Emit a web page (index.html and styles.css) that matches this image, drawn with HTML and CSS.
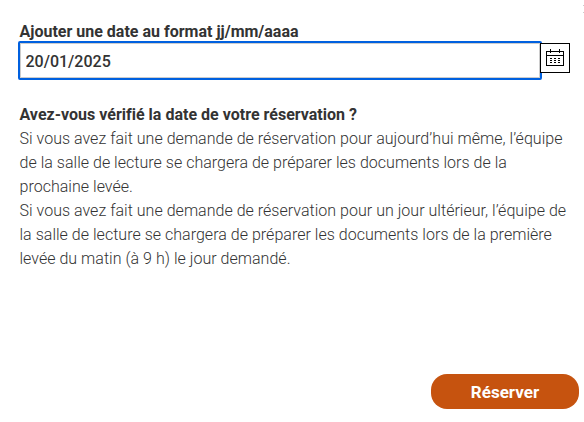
FILE: index.html
```
<!DOCTYPE html>
<html lang="fr">
<head>
<meta charset="utf-8">
<title>Réservation</title>
<link rel="stylesheet" href="styles.css">
</head>
<body>
<form class="dialog">
<span class="edge" aria-hidden="true"></span>
<label class="label" for="date">Ajouter une date au format jj/mm/aaaa</label>
<div class="field">
<input class="input" id="date" type="text" value="20/01/2025">
<button class="picker" type="button" aria-label="Calendrier">
<svg width="18" height="18" viewBox="0 0 18 18" shape-rendering="crispEdges"><path d="M.5 2.500h17v14H.5zM.5 6.500h17M4.500 0v4M13.500 0v4" fill="none" stroke="#000"/><path d="M4 9h2v1H4zM8 9h2v1H8zM12 9h2v1h-2zM4 11h2v1H4zM8 11h2v1H8zM12 11h2v1h-2zM4 13h2v1H4zM8 13h2v1H8zM12 13h2v1h-2z" fill="#000"/></svg>
</button>
</div>
<div class="copy">
<strong>Avez-vous vérifié la date de votre réservation ?</strong>
<p>Si vous avez fait une demande de réservation pour aujourd’hui même, l’équipe<br>de la salle de lecture se chargera de préparer les documents lors de la<br>prochaine levée.</p>
<p>Si vous avez fait une demande de réservation pour un jour ultérieur, l’équipe de<br>la salle de lecture se chargera de préparer les documents lors de la première<br>levée du matin (à 9 h) le jour demandé.</p>
</div>
<button class="submit" type="button">Réserver</button>
</form>
</body>
</html>
```
FILE: styles.css
```
* { box-sizing: border-box; }
body { margin: 0; background: #fff; color: #333; font: 16px/24px Roboto, sans-serif; }
.dialog { position: relative; display: flex; flex-direction: column; height: 422px; padding: 20px 5px 13px 18px; }
.edge { position: absolute; top: 5px; right: 0; width: 1px; height: 1px; background: #ccc; box-shadow: 0 7px #ccc; }
.label { height: 21px; padding-left: 1.5px; font-weight: 700; }
.field { display: flex; align-items: flex-start; height: 39px; }
.input { width: 524px; height: 39px; padding: 2px 5.500px 0; border: 2px solid #0060df; border-radius: 2px; outline: 0; box-shadow: inset 0 0 0 1px #ccc; color: #333; font: 500 16px Roboto, sans-serif; }
.picker { position: relative; display: flex; align-items: center; justify-content: center; width: 30px; height: 30px; margin: 2px 0 0 -2px; padding: 0; border: 1px solid #000; background: #fff; }
.copy { margin-top: 23px; padding-left: 1.500px; white-space: nowrap; }
.copy strong { display: block; font-weight: 700; letter-spacing: .01px; }
.copy p { margin: 0; font-weight: 300; letter-spacing: .025px; }
.submit { align-self: flex-end; width: 148px; height: 35px; margin-top: auto; padding: 0; border: 0; border-radius: 16px; background: #c6530f; color: #fff; font: 700 17px Roboto, sans-serif; }
```
